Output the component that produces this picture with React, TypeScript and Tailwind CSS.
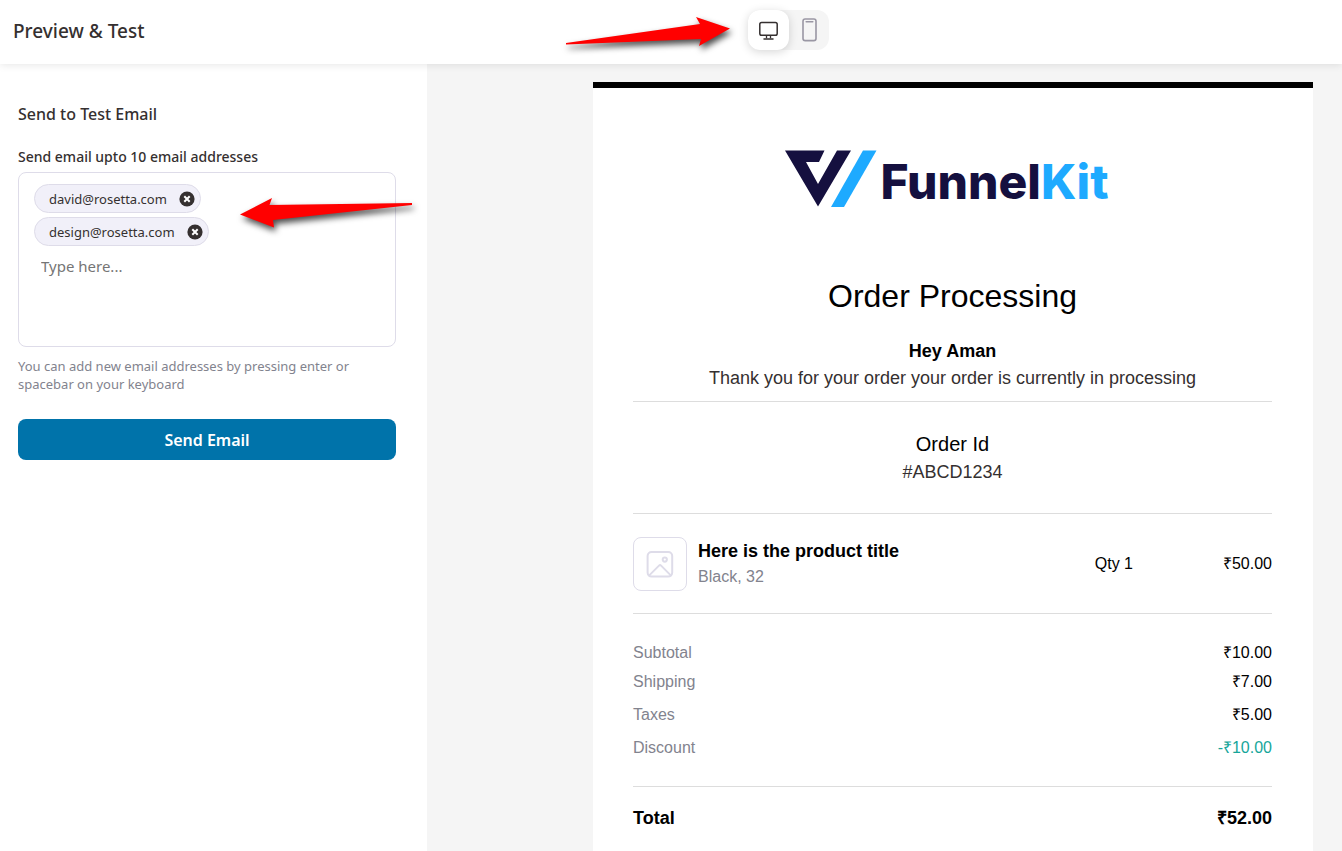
import { useState } from "react";
import type { KeyboardEvent } from "react";

const totals = [
  { label: "Subtotal", value: "₹10.00", row: "h-[25px]", color: "text-black" },
  { label: "Shipping", value: "₹7.00", row: "h-[33px]", color: "text-black" },
  { label: "Taxes", value: "₹5.00", row: "h-[33px]", color: "text-black" },
  { label: "Discount", value: "-₹10.00", row: "h-[33px]", color: "text-[#16a69a]" },
];

function DesktopIcon() {
  return (
    <svg width="20" height="20" viewBox="0 0 20 20" fill="none" stroke="#353030" strokeWidth="1.5">
      <rect x="0.8" y="2.5" width="17.4" height="12.8" rx="1.8" />
      <path d="M7.5 15.3v3M11.5 15.3v3" strokeWidth="1.3" />
      <path d="M5 18.9h9" strokeLinecap="round" />
    </svg>
  );
}

function PhoneIcon() {
  return (
    <svg width="16" height="24" viewBox="0 0 16 24" fill="none" stroke="#9a97a4" strokeWidth="1.6">
      <rect x="2" y="1" width="13" height="21.6" rx="2.2" />
      <path d="M5.2 3.8h6.6" strokeLinecap="round" />
    </svg>
  );
}

function ImageIcon() {
  return (
    <svg width="28" height="28" viewBox="0 0 28 28" fill="none" stroke="#dedce9" strokeWidth="2" strokeLinejoin="round">
      <rect x="1.6" y="2" width="24.6" height="24.6" rx="4" />
      <circle cx="18.8" cy="9.6" r="2.1" />
      <path d="M3 25.6L13 15.6a1.5 1.5 0 0 1 2.1 0L25 25.6" />
    </svg>
  );
}

function CloseIcon() {
  return (
    <svg width="16" height="16" viewBox="0 0 16 16">
      <circle cx="8" cy="8" r="7.6" fill="#353030" />
      <path d="M5.3 5.3l5.4 5.4M10.7 5.3l-5.4 5.4" stroke="#fff" strokeWidth="2" />
    </svg>
  );
}

function Header() {
  const [device, setDevice] = useState("desktop");
  const active = "bg-white shadow-[0_2px_10px_rgba(0,0,0,0.16)]";

  return (
    <header className="relative z-10 flex items-center h-16 bg-white shadow-[0_1px_8px_rgba(0,0,0,0.1)]">
      <h1 className="w-[748px] pl-[13px] pb-0.5 text-[19px] font-medium">Preview &amp; Test</h1>
      <div className="relative flex mb-1 rounded-xl bg-[#f5f5f5]">
        <button
          type="button"
          aria-label="Desktop"
          className={`flex items-center justify-center w-[41px] h-10 rounded-xl ${device === "desktop" ? active : ""}`}
          onClick={() => setDevice("desktop")}
        >
          <DesktopIcon />
        </button>
        <button
          type="button"
          aria-label="Mobile"
          className={`flex items-center justify-center w-10 h-10 rounded-xl ${device === "mobile" ? active : ""}`}
          onClick={() => setDevice("mobile")}
        >
          <PhoneIcon />
        </button>
        <svg
          className="absolute right-full top-0 mr-4 overflow-visible drop-shadow-[2px_4px_3px_rgba(0,0,0,0.7)] pointer-events-none"
          width="168"
          height="44"
          viewBox="0 0 168 44"
        >
          <path d="M2 33L136 14L132 7L166 18.5L135 36L137 29L2 34.6Z" fill="#f00" />
        </svg>
      </div>
    </header>
  );
}

function EmailForm() {
  const [emails, setEmails] = useState(["david@rosetta.com", "design@rosetta.com"]);
  const [value, setValue] = useState("");

  const handleKeyDown = (e: KeyboardEvent<HTMLInputElement>) => {
    if (e.key !== "Enter" && e.key !== " ") return;
    e.preventDefault();
    if (value && emails.length < 10) {
      setEmails([...emails, value]);
      setValue("");
    }
  };

  return (
    <aside className="w-[427px] shrink-0 bg-white pl-[18px] pr-[31px] pt-[38px]">
      <h2 className="text-base leading-6 font-medium">Send to Test Email</h2>
      <label htmlFor="email" className="block mt-[21px] text-sm leading-5 font-medium">
        Send email upto 10 email addresses
      </label>
      <div className="relative mt-[5px] h-[175px] pl-[15px] pt-[11px] rounded-lg border border-[#dedce9]">
        <div className="flex flex-col items-start gap-1">
          {emails.map((email) => (
            <div
              key={email}
              className="flex items-center gap-3 h-[29px] pl-[14px] pr-[5px] rounded-full border border-[#dedce9] bg-[#f1f0f9] text-[13px]"
            >
              <span className="pt-0.5">{email}</span>
              <button type="button" aria-label={`Remove ${email}`} onClick={() => setEmails(emails.filter((x) => x !== email))}>
                <CloseIcon />
              </button>
            </div>
          ))}
        </div>
        <input
          id="email"
          type="text"
          placeholder="Type here..."
          className="mt-2 ml-[7px] w-72 h-6 bg-transparent outline-none text-[15px] placeholder:text-[#757575]"
          value={value}
          onChange={(e) => setValue(e.target.value)}
          onKeyDown={handleKeyDown}
        />
        <svg
          className="absolute left-[220px] top-[22px] overflow-visible drop-shadow-[2px_4px_3px_rgba(0,0,0,0.7)] pointer-events-none"
          width="174"
          height="36"
          viewBox="0 0 174 36"
        >
          <path d="M1 19.5L33 3L30.5 10L173 8L173 10L34 25L35 32.5Z" fill="#f00" />
        </svg>
      </div>
      <p className="mt-[10px] text-[13px] leading-[18px] text-[#82838e]">
        You can add new email addresses by pressing enter or spacebar on your keyboard
      </p>
      <button type="button" className="mt-[26px] w-full h-[41px] rounded-lg bg-[#0073aa] text-base font-semibold text-white">
        Send Email
      </button>
    </aside>
  );
}

function Logo() {
  return (
    <div className="flex items-start justify-center h-[58px] pr-3">
      <svg width="92" height="58" viewBox="0 0 92 58">
        <path d="M0 .5H39.5L34 12H21L33 34L52 .5H66L33 56.5Z" fill="#15103f" />
        <path d="M78 .5H91.5L59 57H46Z" fill="#1eaaff" />
      </svg>
      <span className="pl-1 pt-[7px] font-['Inter',sans-serif] font-extrabold text-5xl leading-[50px] text-[#15103f]">
        Funnel<span className="text-[#1eaaff]">Kit</span>
      </span>
    </div>
  );
}

function EmailPreview() {
  return (
    <article className="w-[720px] px-10 border-t-[6px] border-black bg-white font-['Liberation_Sans',sans-serif] text-base text-black">
      <div className="pt-[62px] pr-[1px]">
        <Logo />
        <h2 className="mt-[68px] text-center text-[32px] leading-10">Order Processing</h2>
        <div className="mt-[22px] pb-[9px] text-center text-lg leading-[27px] border-b border-[#dddddd]">
          <p className="font-bold">Hey Aman</p>
          <p className="text-[#353030]">Thank you for your order your order is currently in processing</p>
        </div>
        <div className="pt-7 pb-[27px] text-center border-b border-[#dddddd]">
          <h3 className="mb-px text-xl leading-7">Order Id</h3>
          <p className="text-lg leading-[27px] text-[#353030]">#ABCD1234</p>
        </div>
        <div className="flex items-center h-[100px] border-b border-[#dddddd]">
          <div className="flex items-center justify-center w-[54px] h-[54px] rounded-lg border border-[#dedce9]">
            <ImageIcon />
          </div>
          <div className="ml-[11px]">
            <p className="text-lg leading-[27px] font-bold">Here is the product title</p>
            <p className="leading-6 text-[#82838e]">Black, 32</p>
          </div>
          <p className="ml-auto">Qty 1</p>
          <p className="w-[139px] text-right">₹50.00</p>
        </div>
        <table className="w-full mt-[26px]">
          <tbody>
            {totals.map((item) => (
              <tr key={item.label} className={item.row}>
                <th scope="row" className="p-0 text-left font-normal text-[#82838e]">{item.label}</th>
                <td className={`p-0 text-right ${item.color}`}>{item.value}</td>
              </tr>
            ))}
          </tbody>
          <tfoot className="text-lg font-bold">
            <tr className="h-[22px] border-b border-[#dddddd]">
              <td colSpan={2} className="p-0"></td>
            </tr>
            <tr className="h-16">
              <th scope="row" className="p-0 text-left">Total</th>
              <td className="p-0 text-right">₹52.00</td>
            </tr>
          </tfoot>
        </table>
      </div>
    </article>
  );
}

export default function App() {
  return (
    <div className="flex flex-col min-h-screen font-['Noto_Sans',sans-serif] text-[#353030]">
      <Header />
      <div className="flex flex-1">
        <EmailForm />
        <main className="flex flex-1 justify-end pt-[18px] pr-[29px] bg-[#f5f5f5]">
          <EmailPreview />
        </main>
      </div>
    </div>
  );
}
